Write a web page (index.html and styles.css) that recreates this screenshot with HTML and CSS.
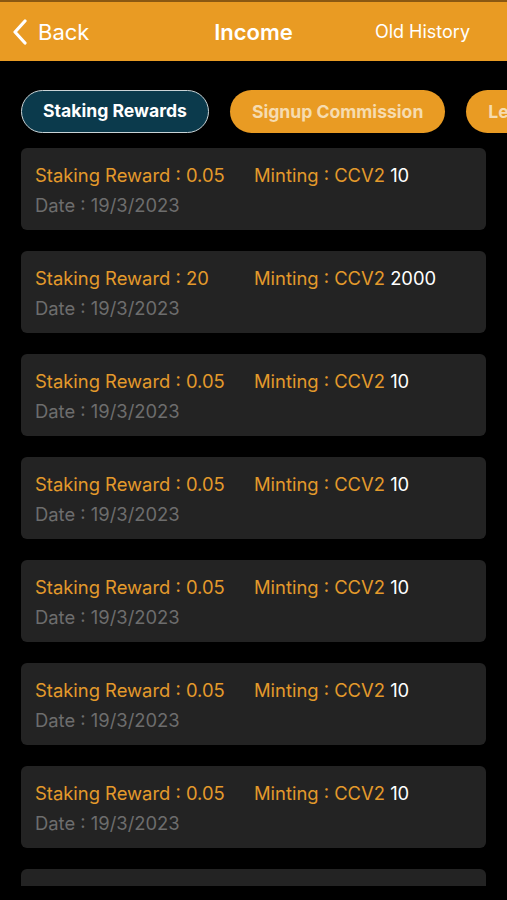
FILE: index.html
```html
<!DOCTYPE html>
<html>
	<head>
		<meta charset="utf-8" />
		<title>Income</title>
		<link rel="stylesheet" href="styles.css">
	</head>
	<body>
		<div class="nav">
			<a class="nav-back" href="#">
				<svg width="16" height="26" viewBox="0 0 16 26"><path d="M13 2 L3 13 L13 24" fill="none" stroke="#fff" stroke-width="3.2" stroke-linecap="round" stroke-linejoin="round"/></svg>
				Back
			</a>
			<div class="nav-title">Income</div>
			<a class="nav-right" href="#">Old History</a>
		</div>

		<div class="tabs">
			<a class="tab tab-active" href="#">Staking Rewards</a>
			<a class="tab" href="#">Signup Commission</a>
			<a class="tab" href="#">Le</a>
		</div>

		<div class="list">
			<div class="card">
				<div class="row"><span class="reward">Staking Reward : 0.05</span><span class="mint">Minting : CCV2 <b>10</b></span></div>
				<div class="date">Date : 19/3/2023</div>
			</div>
			<div class="card">
				<div class="row"><span class="reward">Staking Reward : 20</span><span class="mint">Minting : CCV2 <b>2000</b></span></div>
				<div class="date">Date : 19/3/2023</div>
			</div>
			<div class="card">
				<div class="row"><span class="reward">Staking Reward : 0.05</span><span class="mint">Minting : CCV2 <b>10</b></span></div>
				<div class="date">Date : 19/3/2023</div>
			</div>
			<div class="card">
				<div class="row"><span class="reward">Staking Reward : 0.05</span><span class="mint">Minting : CCV2 <b>10</b></span></div>
				<div class="date">Date : 19/3/2023</div>
			</div>
			<div class="card">
				<div class="row"><span class="reward">Staking Reward : 0.05</span><span class="mint">Minting : CCV2 <b>10</b></span></div>
				<div class="date">Date : 19/3/2023</div>
			</div>
			<div class="card">
				<div class="row"><span class="reward">Staking Reward : 0.05</span><span class="mint">Minting : CCV2 <b>10</b></span></div>
				<div class="date">Date : 19/3/2023</div>
			</div>
			<div class="card">
				<div class="row"><span class="reward">Staking Reward : 0.05</span><span class="mint">Minting : CCV2 <b>10</b></span></div>
				<div class="date">Date : 19/3/2023</div>
			</div>
			<div class="card"></div>
		</div>
	</body>
</html>
```

FILE: styles.css
```css
body{margin: 0px;padding: 0px;background: #000;font-family: Inter, "Liberation Sans", sans-serif;overflow: hidden;}
a{text-decoration: none;}
.nav{
	height: 59px;display: flex;align-items: center;
	border-top: 2px solid #8a5812;background: #e99b23;
	position: relative;
}
.nav-back{
	display: flex;align-items: center;gap: 10px;
	padding-left: 12px;color: #fff;font-size: 22px;
}
.nav-title{
	position: absolute;left: 0px;right: 0px;text-align: center;
	color: #fff;font-size: 22px;font-weight: 600;pointer-events: none;
}
.nav-right{margin-left: auto;padding-right: 37px;color: #fff;font-size: 18px;}
.tabs{
	display: flex;gap: 21px;
	padding: 29px 0px 0px 21px;
	white-space: nowrap;overflow: hidden;
}
.tab{
	flex: none;height: 43px;line-height: 43px;box-sizing: border-box;
	padding: 0px 22px;border-radius: 22px;
	background: #e99b23;color: #f6dcb0;
	font-size: 17.6px;font-weight: 700;
}
.tab-active{
	background: #0b3a4c;color: #fff;
	border: 1.5px solid #c9d3d6;line-height: 40px;padding: 0px 21px;
}
.list{
	height: 738px;overflow: hidden;
	padding: 15px 21px 0px 21px;
	display: flex;flex-direction: column;gap: 21px;
}
.card{
	flex: none;height: 82px;box-sizing: border-box;
	padding: 12px 14px 0px 14px;
	background: #232323;border-radius: 6px;
	font-size: 18.4px;line-height: 30px;
}
.row{display: flex;}
.reward{width: 219px;color: #e39a2b;}
.mint{color: #e39a2b;}
.mint b{font-weight: 400;color: #fff;}
.date{color: #6d6d6d;}
```
